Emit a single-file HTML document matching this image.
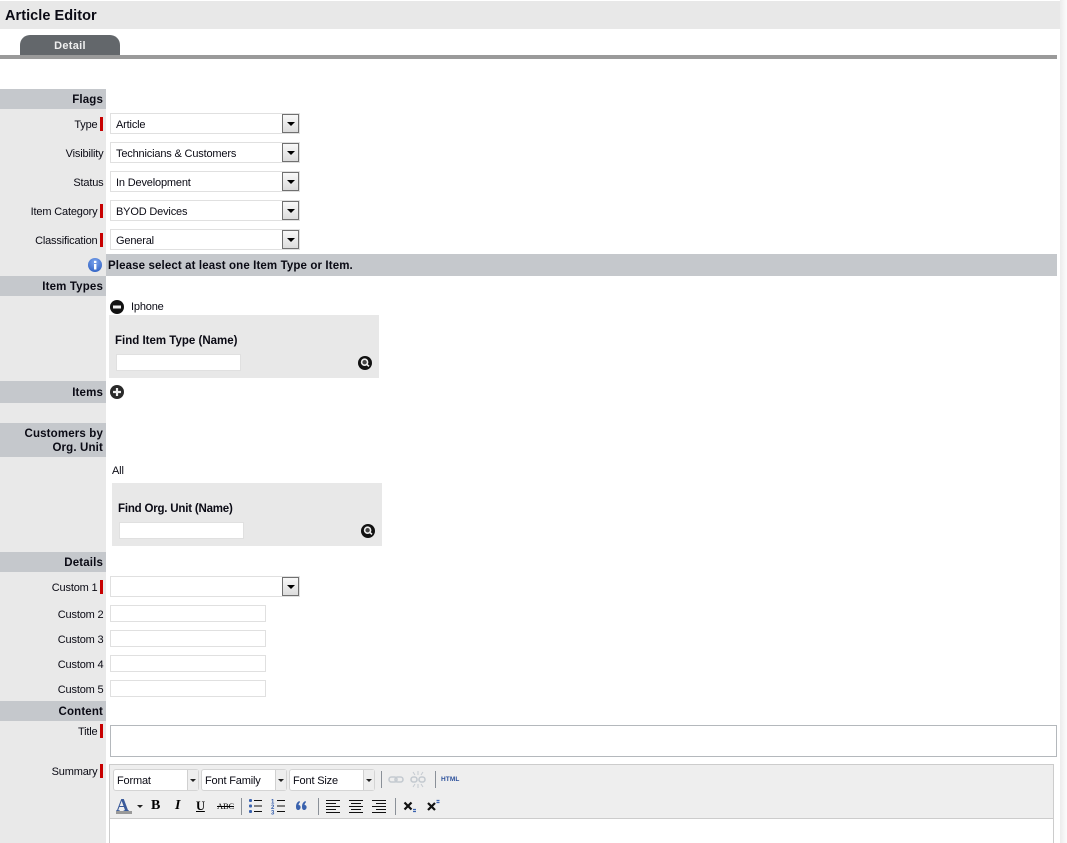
<!DOCTYPE html>
<html><head><meta charset="utf-8"><style>
html,body{margin:0;padding:0;background:#fff;width:1067px;height:843px;overflow:hidden}
body{position:relative;font-family:"Liberation Sans",sans-serif;font-size:11px;letter-spacing:-.17px;color:#0a0a14}
div,span.a,svg{position:absolute;box-sizing:border-box}
.sec{left:0;width:106px;background:#c5c8cc;font-weight:bold;text-align:right;padding-right:3px;font-size:11.5px;line-height:14px;letter-spacing:.15px}
.l{left:0;width:103.5px;text-align:right;height:14px;line-height:14px;margin-top:1px;white-space:nowrap}
.l.r{width:97.5px}
.m{left:100px;width:3px;height:14px;background:#c80000}
.sel{left:110px;width:190px;height:21px;background:#fff;border:1px solid #e0e0e0;padding-left:5px;line-height:23px}
.btn{left:171px;top:0;width:17px;height:19px;border:1px solid #707070;background:linear-gradient(#f8f8f8,#dcdcdc)}
.btn:after{content:"";position:absolute;left:4px;top:7px;border:4px solid transparent;border-top:4px solid #000;border-bottom:0}
.in{left:110px;width:156px;height:17px;background:#fff;border:1px solid #e0e0e0}
.find{width:270px;height:63px;background:#e8e8e8}
.find b{position:absolute;left:6px;top:19px;font-size:11.5px;line-height:14px;letter-spacing:0}
.find i{position:absolute;left:7px;top:39px;width:125px;height:17px;box-sizing:border-box;background:#fff;border:1px solid #e0e0e0}
.fs{top:769px;height:22px;width:86px;background:#fff;border:1px solid #d4d4d4;border-radius:3px;padding-left:3px;line-height:22px;font-size:11px}
.fs:before{content:"";position:absolute;right:0;top:0;width:10px;height:20px;background:#eee;border-left:1px solid #d0d0d0}
.fs:after{content:"";position:absolute;right:2px;top:9px;border:3px solid transparent;border-top:3px solid #222;border-bottom:0}
.sp{width:1px;height:17px;background:#8a9098}
</style></head><body>
<div style="left:1060px;top:0;width:7px;height:843px;background:linear-gradient(90deg,#ececec,#fbfbfb)"></div>
<div style="left:0;top:1px;width:1060px;height:28px;background:#e8e8e8;font-weight:bold;font-size:14.5px;line-height:30px;padding-left:5px;letter-spacing:.05px">Article Editor</div>
<div style="left:20px;top:35px;width:100px;height:20px;background:#63676b;border-radius:10px 10px 0 0;color:#f0f0f0;font-weight:bold;font-size:11px;line-height:22px;text-align:center;letter-spacing:.3px">Detail</div>
<div style="left:0;top:55px;width:1057px;height:4px;background:#9a9a9a"></div>
<div style="left:0;top:89px;width:106px;height:754px;background:#e9e9e9"></div>

<div class="sec" style="top:89px;height:20px;line-height:22px">Flags</div>
<div class="l r" style="top:117px">Type</div><div class="m" style="top:117px"></div>
<div class="l" style="top:146px">Visibility</div>
<div class="l" style="top:175px">Status</div>
<div class="l r" style="top:204px">Item Category</div><div class="m" style="top:204px"></div>
<div class="l r" style="top:233px">Classification</div><div class="m" style="top:233px"></div>

<div class="sel" style="top:113px">Article<div class="btn"></div></div>
<div class="sel" style="top:142px">Technicians &amp; Customers<div class="btn"></div></div>
<div class="sel" style="top:171px">In Development<div class="btn"></div></div>
<div class="sel" style="top:200px">BYOD Devices<div class="btn"></div></div>
<div class="sel" style="top:229px">General<div class="btn"></div></div>

<svg style="left:88px;top:258px" width="14" height="14" viewBox="0 0 14 14"><defs><radialGradient id="g" cx=".5" cy=".3" r=".8"><stop offset="0" stop-color="#7ea6ee"/><stop offset="1" stop-color="#2a5cc0"/></radialGradient></defs><circle cx="7" cy="7" r="7" fill="url(#g)"/><rect x="6" y="6" width="2.4" height="5.5" fill="#fff"/><rect x="6" y="2.8" width="2.4" height="2.2" fill="#fff"/></svg>
<div style="left:106px;top:254px;width:951px;height:22px;background:#c5c8cc;font-weight:bold;font-size:11.5px;line-height:24px;padding-left:2px;letter-spacing:.12px">Please select at least one Item Type or Item.</div>

<div class="sec" style="top:276px;height:20px;line-height:22px">Item Types</div>
<svg style="left:110px;top:300px" width="14" height="14" viewBox="0 0 14 14"><circle cx="7" cy="7" r="7" fill="#111"/><rect x="3" y="5.5" width="8" height="3" fill="#eee"/></svg>
<div style="left:131px;top:300px;line-height:14px">Iphone</div>
<div class="find" style="left:109px;top:315px"><b>Find Item Type (Name)</b><i></i>
<svg style="left:249px;top:41px" width="14" height="14" viewBox="0 0 14 14"><circle cx="7" cy="7" r="7" fill="#111"/><circle cx="6.6" cy="6.2" r="3" fill="#444" stroke="#eee" stroke-width="1.6"/><path d="M8.6 8.2L11 10.4" stroke="#eee" stroke-width="1.6"/></svg></div>

<div class="sec" style="top:381px;height:22px;line-height:24px">Items</div>
<svg style="left:110px;top:385px" width="14" height="14" viewBox="0 0 14 14"><circle cx="7" cy="7" r="7" fill="#2a2a2a"/><path d="M7 3v8M3 7h8" stroke="#eee" stroke-width="2.2"/></svg>

<div class="sec" style="top:423px;height:34px;padding-top:4px">Customers by<br>Org. Unit</div>
<div style="left:112px;top:464px;line-height:14px">All</div>
<div class="find" style="left:112px;top:483px"><b style="letter-spacing:-.2px">Find Org. Unit (Name)</b><i></i>
<svg style="left:249px;top:41px" width="14" height="14" viewBox="0 0 14 14"><circle cx="7" cy="7" r="7" fill="#111"/><circle cx="6.6" cy="6.2" r="3" fill="#444" stroke="#eee" stroke-width="1.6"/><path d="M8.6 8.2L11 10.4" stroke="#eee" stroke-width="1.6"/></svg></div>

<div class="sec" style="top:552px;height:20px;line-height:22px">Details</div>
<div class="l r" style="top:580px">Custom 1</div><div class="m" style="top:580px"></div>
<div class="sel" style="top:576px"><div class="btn"></div></div>
<div class="l" style="top:607px">Custom 2</div><div class="in" style="top:605px"></div>
<div class="l" style="top:632px">Custom 3</div><div class="in" style="top:630px"></div>
<div class="l" style="top:657px">Custom 4</div><div class="in" style="top:655px"></div>
<div class="l" style="top:682px">Custom 5</div><div class="in" style="top:680px"></div>

<div class="sec" style="top:701px;height:20px;line-height:22px">Content</div>
<div class="l r" style="top:724px">Title</div><div class="m" style="top:724px"></div>
<div style="left:110px;top:725px;width:947px;height:32px;background:#fff;border:1px solid #b4b8bc"></div>
<div class="l r" style="top:764px">Summary</div><div class="m" style="top:764px"></div>

<div style="left:109px;top:764px;width:945px;height:90px;background:#fff;border:1px solid #ccc"></div>
<div style="left:110px;top:765px;width:943px;height:54px;background:#eeeeee;border-bottom:1px solid #ccc"></div>
<div class="fs" style="left:113px">Format</div>
<div class="fs" style="left:201px">Font Family</div>
<div class="fs" style="left:289px">Font Size</div>
<div class="sp" style="left:381px;top:771px"></div>
<div class="sp" style="left:435px;top:771px"></div>
<svg style="left:388px;top:771px" width="40" height="17" viewBox="0 0 40 17"><g fill="none" stroke="#c4cad0" stroke-width="1.6"><rect x="1" y="6" width="8" height="5" rx="2.5"/><rect x="7" y="6" width="8" height="5" rx="2.5"/><rect x="23" y="6" width="6" height="5" rx="2.5"/><rect x="31" y="6" width="6" height="5" rx="2.5"/><path d="M30 0v4M30 13v4M25 1l2 3M35 1l-2 3M25 16l2-3M35 16l-2-3" stroke-width="1"/></g></svg>
<span class="a" style="left:441px;top:775px;font-size:6.5px;font-weight:bold;color:#2a4f9a;line-height:9px;letter-spacing:.1px">HTML</span>

<span class="a" style="left:116px;top:797px;font-family:'Liberation Serif',serif;font-weight:bold;font-size:18px;line-height:16px;letter-spacing:0;color:#3a5a9a">A</span>
<div style="left:116px;top:811px;width:16px;height:3px;background:#999"></div>
<div style="left:137px;top:805px;width:0;height:0;border:3px solid transparent;border-top:3px solid #222;border-bottom:0"></div>
<span class="a" style="left:151px;top:799px;font-family:'Liberation Serif',serif;font-weight:bold;font-size:14px;line-height:14px;color:#000">B</span>
<span class="a" style="left:175px;top:799px;font-family:'Liberation Serif',serif;font-weight:bold;font-style:italic;font-size:14px;line-height:14px;color:#000">I</span>
<span class="a" style="left:196px;top:799px;font-family:'Liberation Serif',serif;font-weight:bold;font-size:12.5px;line-height:14px;color:#000;text-decoration:underline">U</span>
<span class="a" style="left:217px;top:801px;font-family:'Liberation Serif',serif;font-size:8.5px;line-height:10px;color:#000;text-decoration:line-through">ABC</span>
<div class="sp" style="left:241px;top:798px"></div>
<svg style="left:248px;top:798px" width="66" height="17" viewBox="0 0 66 17"><g fill="#3a62ae"><rect x="1" y="1" width="3" height="3" rx="1"/><rect x="1" y="6.500" width="3" height="3" rx="1"/><rect x="1" y="12" width="3" height="3" rx="1"/><text x="23" y="5.500" font-size="6" font-weight="bold" font-family="Liberation Sans">1</text><text x="23" y="11" font-size="6" font-weight="bold" font-family="Liberation Sans">2</text><text x="23" y="16.500" font-size="6" font-weight="bold" font-family="Liberation Sans">3</text><path d="M48 9c0-3 1-5 3.500-6l.5 1.200C51 5 50.600 6 50.600 7c1.200 0 2 .8 2 2.200S51.600 12 50.200 12 48 11 48 9zM54 9c0-3 1-5 3.500-6l.5 1.200C57 5 56.600 6 56.600 7c1.200 0 2 .8 2 2.200S57.600 12 56.200 12 54 11 54 9z"/></g><path d="M6 2.500h8M6 8h8M6 13.500h8M29 2.500h8M29 8h8M29 13.500h8" stroke="#111" stroke-width="1"/></svg>
<div class="sp" style="left:318px;top:798px"></div>
<svg style="left:325px;top:798px" width="64" height="16" viewBox="0 0 64 16"><path d="M1 2.500h14M1 5.500h10M1 8.500h14M1 11.500h10M1 14.500h14M24 2.500h14M26 5.500h10M24 8.500h14M26 11.500h10M24 14.500h14M47 2.500h14M51 5.500h10M47 8.500h14M51 11.500h10M47 14.500h14" stroke="#111" stroke-width="1" fill="none"/></svg>
<div class="sp" style="left:395px;top:798px"></div>
<svg style="left:403px;top:799px" width="40" height="15" viewBox="0 0 40 15"><path d="M1.500 3.500l7 7M8.500 3.500l-7 7M25 4l7 7M32 4l-7 7" stroke="#111" stroke-width="2.200" fill="none"/><path d="M10 10.500h3M10 12.500h3M33.500 1.500h3M33.500 3.500h3" stroke="#3a62ae" stroke-width="1.200"/></svg>
</body></html>
